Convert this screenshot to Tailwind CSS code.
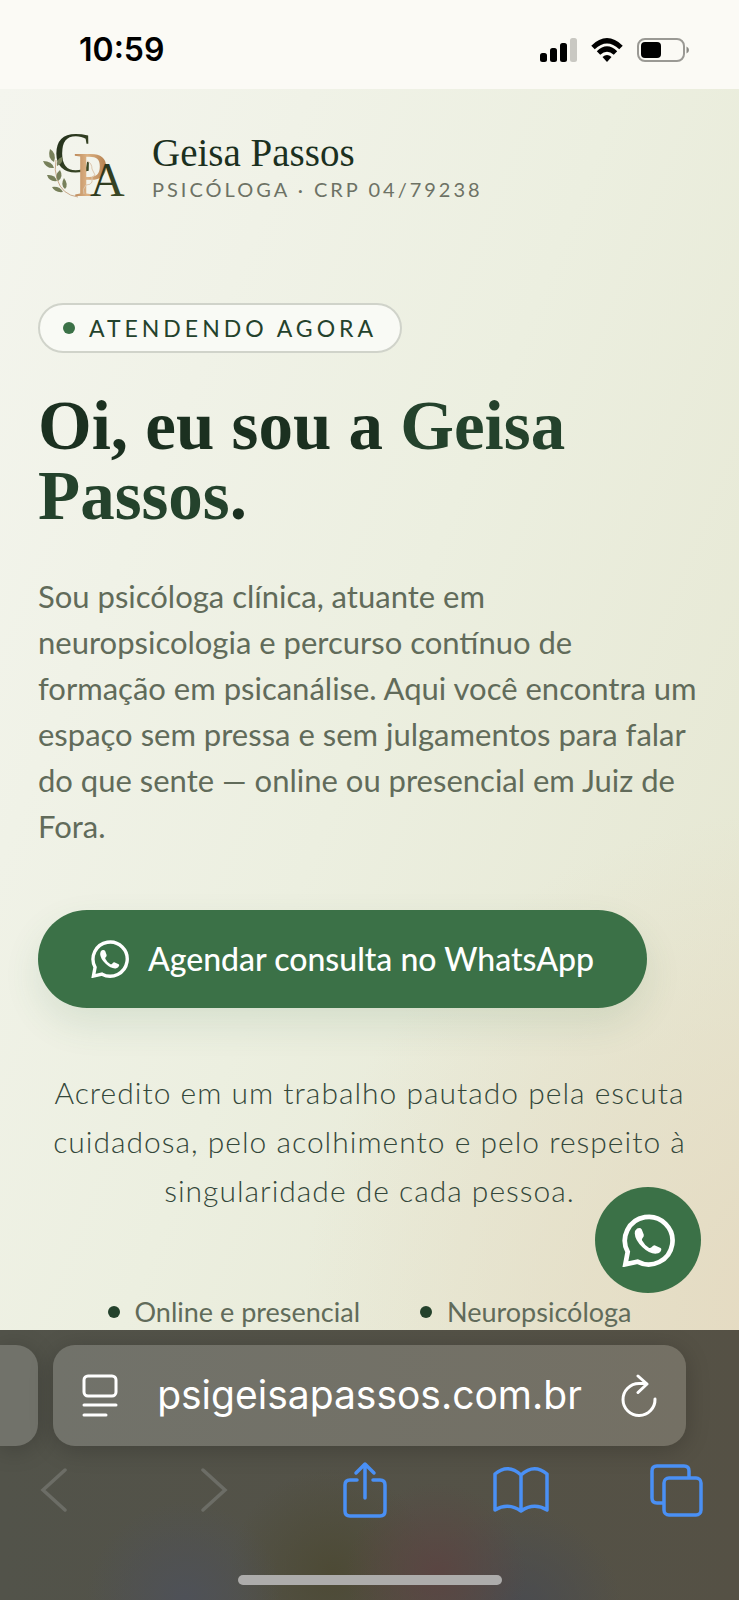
<!DOCTYPE html>
<html lang="pt-BR">
<head>
    <meta charset="UTF-8">
    <meta name="viewport" content="width=device-width, initial-scale=1.0">
    <title>Geisa Passos - Psicóloga</title>
    <script src="https://cdn.jsdelivr.net/npm/@tailwindcss/browser@4"></script>
</head>
<body class="min-h-screen flex flex-col bg-[#fbfaf5] font-['Lato',sans-serif]">

    <!-- Status bar -->
    <div class="flex justify-between items-center h-[89px] pt-[10px] pl-[79px] pr-[50px] text-black">
        <span class="font-['Inter',sans-serif] font-semibold text-[32px]">10:59</span>
        <div class="flex items-center gap-[14px]">
            <svg class="w-[37px] h-6" viewBox="0 0 37 24">
                <rect x="0" y="15" width="7" height="9" rx="2.5"/>
                <rect x="10" y="10" width="7" height="14" rx="2.5"/>
                <rect x="20" y="5" width="7" height="19" rx="2.5"/>
                <rect x="30" y="0" width="7" height="24" rx="2.5" fill="#c9c8c2"/>
            </svg>
            <svg class="w-8 h-6" viewBox="0 0 32 24" fill="none" stroke="#000" stroke-width="5">
                <path d="M2 9.5Q16 -4 30 9.5"/>
                <path d="M7.5 15Q16 7 24.5 15"/>
                <path d="M11.5 19q4.5-4 9 0L16 24z" fill="#000" stroke="none"/>
            </svg>
            <svg class="w-[52px] h-6" viewBox="0 0 52 24">
                <rect x="1" y="1" width="46" height="22" rx="7" fill="none" stroke="#9a9994" stroke-width="2"/>
                <rect x="4" y="4" width="20" height="16" rx="4"/>
                <path d="M49.5 8.5q2.5 1 2.5 3.5t-2.5 3.5z" fill="#8a8984"/>
            </svg>
        </div>
    </div>

    <!-- Page -->
    <main class="flex-1 px-[38px] bg-[radial-gradient(circle_at_108%_98%,#e5dac1_0%,#e5dac100_34%),linear-gradient(112deg,#f4f5ee_0%,#ecefe0_50%,#e4e5cf_100%)]">
        <header class="flex items-center gap-7 pt-9">
            <svg class="w-[86px] h-20 overflow-visible" viewBox="38 125 86 80" role="img" aria-label="GPA">
                <defs>
                    <linearGradient id="dark" x1="0" y1="0" x2="1" y2="1">
                        <stop offset="0" stop-color="#1d2a18"/>
                        <stop offset="1" stop-color="#43502a"/>
                    </linearGradient>
                    <linearGradient id="gold" x1="0" y1="0" x2="1" y2="0">
                        <stop offset="0" stop-color="#b98556"/>
                        <stop offset="0.4" stop-color="#dcb284"/>
                        <stop offset="1" stop-color="#b07a48"/>
                    </linearGradient>
                </defs>
                <g font-family="Liberation Serif" fill="url(#dark)">
                    <text x="54" y="172" font-size="57">C</text>
                    <text x="73" y="196" font-size="64" fill="url(#gold)">P</text>
                    <text x="90" y="196" font-size="48">A</text>
                </g>
                <path d="M87 161q5 2 5 8l3 6-3 2v5q-1 3-6 3-4 4-2 9" fill="none" stroke="#dcc6ad"/>
                <path d="M78 197q-16-2-21-18-3-9-1-19" fill="none" stroke="#c9a98a"/>
                <g fill="#77805a">
                    <path d="M50 149q7 4 4 13-7-4-4-13z"/>
                    <path d="M62 157q2 6-5 9-1-7 5-9z"/>
                    <path d="M43 161q9 0 11 7-8 1-11-7z"/>
                    <path d="M60 170q4 7-2 11-4-6 2-11z"/>
                    <path d="M47 175q8-1 10 6-8 1-10-6z"/>
                    <path d="M64 178q5 7 1 11-5-4-1-11z"/>
                    <path d="M52 187q8-1 11 5-8 1-11-5z"/>
                </g>
            </svg>
            <div class="pt-2">
                <p class="font-['Liberation_Serif',serif] text-[39px] leading-10 text-[#1b3020]">Geisa Passos</p>
                <p class="text-xl leading-8 tracking-[3px] text-[#6d7265]">PSICÓLOGA · CRP 04/79238</p>
            </div>
        </header>

        <section class="pt-[98px]">
            <div class="inline-flex items-center gap-[14px] h-[50px] px-[23px] rounded-full border-2 border-[#d0d3ca] bg-[#f9faf5] text-[#24422c] text-[23px] tracking-[4px]">
                <span class="size-3 rounded-full bg-[#3b7147]"></span>
                ATENDENDO AGORA
            </div>

            <h1 class="mt-[38px] font-['Liberation_Serif',serif] font-bold text-[69px] leading-[70px] text-[#1b3020]">Oi, eu sou a <span class="text-[#24422c]">Geisa<br>Passos</span>.</h1>

            <p class="mt-[42px] text-[31px] leading-[46px] text-[#616b5a]">
                Sou psicóloga clínica, atuante em<br>
                neuropsicologia e percurso contínuo de<br>
                formação em psicanálise. Aqui você encontra um<br>
                espaço sem pressa e sem julgamentos para falar<br>
                do que sente — online ou presencial em Juiz de<br>
                Fora.
            </p>

            <a href="#whatsapp" class="mt-[61px] inline-flex items-center gap-[19px] h-[98px] px-[53px] rounded-full bg-[#3b7147] text-white text-[32px] font-medium shadow-[0_16px_36px_#3b71471f]">
                <svg class="size-[38px]" viewBox="0 0 158 158">
                    <path d="M17 113A71 71 0 1 1 46 142L10 150z" fill="none" stroke="currentColor" stroke-width="14"/>
                    <path d="M45 43q10-3 14 3l6 16q1 6-4 10-3 3-1 7 8 15 21 22 4 1 7-2 5-6 9-6l18 8q3 2 2 6-3 10-14 11-20 2-42-19Q39 78 38 58q0-10 7-15z" fill="currentColor"/>
                </svg>
                Agendar consulta no WhatsApp
            </a>

            <p class="mt-[60px] text-center text-[30px] leading-[49px] font-light tracking-[1px] text-[#34473a]">
                Acredito em um trabalho pautado pela escuta<br>
                cuidadosa, pelo acolhimento e pelo respeito à<br>
                singularidade de cada pessoa.
            </p>

            <ul class="mt-[81px] flex justify-center gap-[60px] text-[27px] leading-8 text-[#616b5a]">
                <li class="flex items-center gap-[15px]"><span class="size-3 rounded-full bg-[#24422c]"></span>Online e presencial</li>
                <li class="flex items-center gap-[15px]"><span class="size-3 rounded-full bg-[#24422c]"></span>Neuropsicóloga</li>
            </ul>
        </section>
    </main>

    <!-- Floating WhatsApp button -->
    <a href="#whatsapp" aria-label="WhatsApp" class="fixed right-[38px] bottom-[307px] size-[106px] rounded-full bg-[#3b7147] text-white flex items-center justify-center">
        <svg class="size-[53px]" viewBox="0 0 158 158">
            <path d="M17 113A71 71 0 1 1 46 142L10 150z" fill="none" stroke="currentColor" stroke-width="14"/>
            <path d="M45 43q10-3 14 3l6 16q1 6-4 10-3 3-1 7 8 15 21 22 4 1 7-2 5-6 9-6l18 8q3 2 2 6-3 10-14 11-20 2-42-19Q39 78 38 58q0-10 7-15z" fill="currentColor"/>
        </svg>
    </a>

    <!-- Browser toolbar -->
    <footer class="sticky bottom-0 overflow-hidden py-[15px] bg-[radial-gradient(circle_at_59%_90%,#5a4542_0%,#5a454200_18%),radial-gradient(circle_at_70%_105%,#494b50_0%,#494b5000_18%),radial-gradient(circle_at_25%_100%,#4e5158_0%,#4e515800_16%),radial-gradient(circle_at_45%_90%,#4d4a35_0%,#4d4a3500_22%),linear-gradient(90deg,#52534a,#555145)]">
        <div class="flex gap-[15px] pr-[53px]">
            <div class="shrink-0 w-[38px] h-[101px] rounded-r-[22px] bg-[#71726a] shadow-[0_4px_24px_#00000033]"></div>
            <div class="flex-1 min-w-0 flex items-center justify-between h-[101px] px-[29px] rounded-[22px] bg-linear-to-r from-[#71726a] to-[#747064] shadow-[0_4px_24px_#00000033] text-white">
                <button class="shrink-0" aria-label="Menu da página">
                    <svg class="w-9 h-11" viewBox="0 0 36 44" fill="none" stroke="currentColor" stroke-width="3" stroke-linecap="round">
                        <rect x="2" y="2" width="32" height="20" rx="4"/>
                        <path d="M2 31h32M2 41h22"/>
                    </svg>
                </button>
                <input type="text" aria-label="Endereço" value="psigeisapassos.com.br" class="flex-1 min-w-0 text-center font-['Inter',sans-serif] text-[39px]">
                <button class="shrink-0" aria-label="Recarregar">
                    <svg class="w-9 h-11" viewBox="0 0 36 44" fill="none" stroke="currentColor" stroke-width="3" stroke-linecap="round" stroke-linejoin="round">
                        <path d="M34 25A16 16 0 1 1 18 9.5h7"/>
                        <path d="M17 2l9 8-9 8.5"/>
                    </svg>
                </button>
            </div>
        </div>
        <nav class="flex justify-between mt-[15px] h-[58px] pl-[26px] pr-[35px] text-[#4a90f5]">
            <button aria-label="Voltar" class="w-14 flex items-center justify-center text-[#6c6d66]">
                <svg class="w-9 h-11" viewBox="0 0 36 44" fill="none" stroke="currentColor" stroke-width="3.5" stroke-linecap="round"><path d="M29 2L7 22l22 20"/></svg>
            </button>
            <button aria-label="Avançar" class="w-14 flex items-center justify-center text-[#6c6d66]">
                <svg class="w-9 h-11" viewBox="0 0 36 44" fill="none" stroke="currentColor" stroke-width="3.5" stroke-linecap="round"><path d="M11 2l22 20-22 20"/></svg>
            </button>
            <button aria-label="Compartilhar" class="w-14 flex items-center justify-center">
                <svg class="w-11 h-[58px]" viewBox="0 0 44 58" fill="none" stroke="currentColor" stroke-width="3.5" stroke-linecap="round" stroke-linejoin="round">
                    <path d="M14 19H7q-5 0-5 5v26q0 5 5 5h30q5 0 5-5V24q0-5-5-5h-7"/>
                    <path d="M22 37V3M13 12l9-9 9 9"/>
                </svg>
            </button>
            <button aria-label="Favoritos" class="w-14 flex items-center justify-center">
                <svg class="w-14 h-12" viewBox="0 0 56 48" fill="none" stroke="currentColor" stroke-width="3.5" stroke-linejoin="round">
                    <path d="M28 9Q15-3 2 8v36q13-8 26 1 13-9 26-1V8Q41-3 28 9zV45"/>
                </svg>
            </button>
            <button aria-label="Abas" class="w-14 flex items-center justify-center">
                <svg class="size-[53px]" viewBox="0 0 53 53" fill="none" stroke="currentColor" stroke-width="3.5">
                    <rect x="14" y="14" width="37" height="37" rx="5"/>
                    <path d="M13 39H7q-5 0-5-5V7q0-5 5-5h27q5 0 5 5v6"/>
                </svg>
            </button>
        </nav>
        <div class="mx-auto mt-14 w-[264px] h-[10px] rounded-full bg-[#adacab]"></div>
    </footer>

</body>
</html>
